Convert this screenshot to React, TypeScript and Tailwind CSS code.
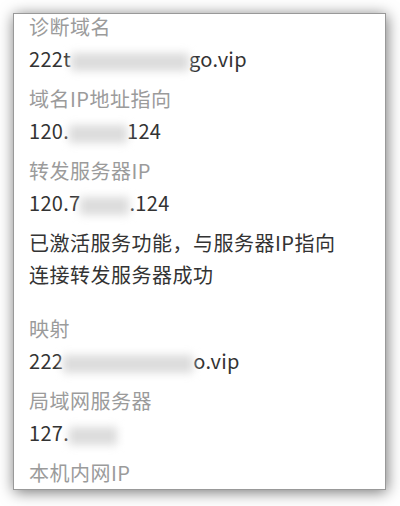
import React from 'react';

const font = { fontFamily: '"Noto Sans CJK SC", "Noto Sans", sans-serif' };

function Blur({ w }: { w: number }) {
  return (
    <span
      className="inline-block h-[18px] bg-[#dcdcdc] align-middle blur-[4px]"
      style={{ width: w }}
    />
  );
}

function Label({ children }: { children: React.ReactNode }) {
  return (
    <div className="text-[20px] leading-[32px] tracking-[0.5px] text-[#9b9b9b]">{children}</div>
  );
}

function Value({ children }: { children: React.ReactNode }) {
  return (
    <div className="mb-2 whitespace-nowrap text-[20px] leading-[32px] tracking-[0.3px] text-[#333333]">
      {children}
    </div>
  );
}

export default function App() {
  return (
    <div className="h-[506px] w-[400px] bg-white pl-[13px] pt-[13px]" style={font}>
      <div className="h-[477px] w-[373px] overflow-hidden border border-[#999999] bg-white shadow-[1px_2px_14px_rgba(0,0,0,0.55)]">
        <div className="-mt-[3px] pl-[15px]">
          <Label>诊断域名</Label>
          <Value>
            222t<Blur w={118} />go.vip
          </Value>
          <Label>域名IP地址指向</Label>
          <Value>
            120.<Blur w={58} />124
          </Value>
          <Label>转发服务器IP</Label>
          <Value>
            120.7<Blur w={49} />.124
          </Value>
          <div className="text-[20px] leading-[32px] tracking-[0.5px] text-[#333333]">
            已激活服务功能，与服务器IP指向
            <br />
            连接转发服务器成功
          </div>
          <div className="mt-[22px]">
            <Label>映射</Label>
            <Value>
              222<Blur w={130} />o.vip
            </Value>
            <Label>局域网服务器</Label>
            <Value>
              127.<Blur w={48} />
            </Value>
            <Label>本机内网IP</Label>
          </div>
        </div>
      </div>
    </div>
  );
}
